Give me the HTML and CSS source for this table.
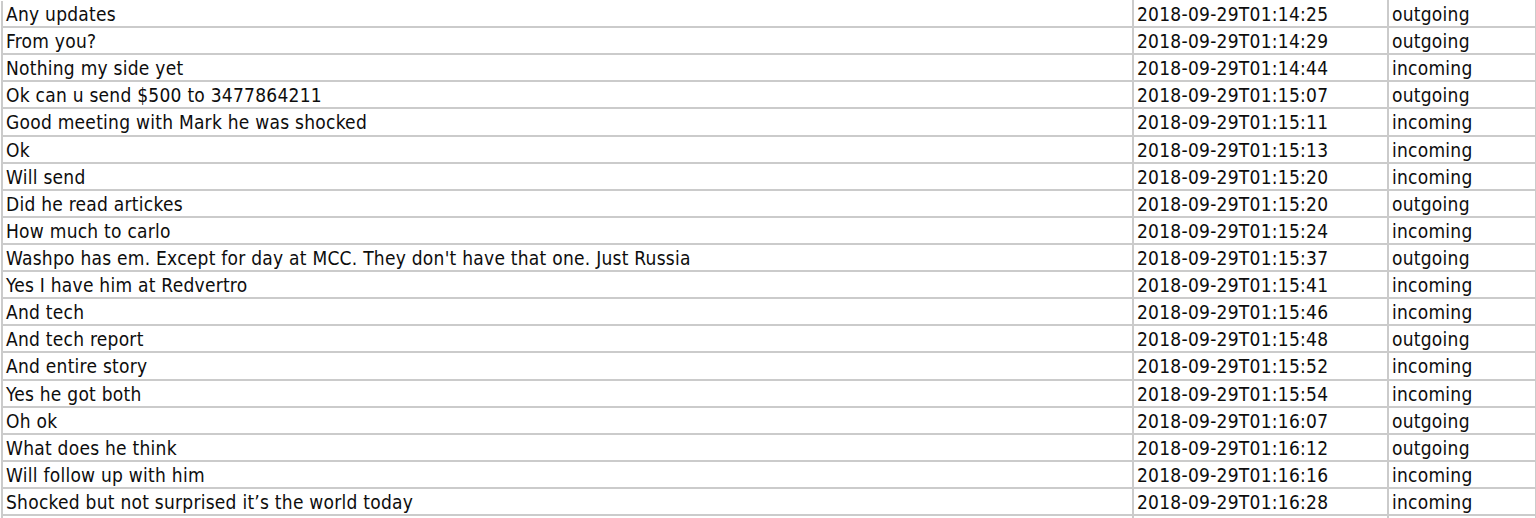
FILE: index.html
```html
<!DOCTYPE html>
<html lang="en">
<head>
    <meta charset="UTF-8">
    <title>Messages</title>
    <link rel="stylesheet" href="styles.css">
</head>
<body>

<table class="sheet">
    <colgroup>
        <col class="col-body">
        <col class="col-time">
        <col class="col-dir">
    </colgroup>
    <tr><td>Any updates</td><td>2018-09-29T01:14:25</td><td>outgoing</td></tr>
    <tr><td>From you?</td><td>2018-09-29T01:14:29</td><td>outgoing</td></tr>
    <tr><td>Nothing my side yet</td><td>2018-09-29T01:14:44</td><td>incoming</td></tr>
    <tr><td>Ok can u send $500 to 3477864211</td><td>2018-09-29T01:15:07</td><td>outgoing</td></tr>
    <tr><td>Good meeting with Mark he was shocked</td><td>2018-09-29T01:15:11</td><td>incoming</td></tr>
    <tr><td>Ok</td><td>2018-09-29T01:15:13</td><td>incoming</td></tr>
    <tr><td>Will send</td><td>2018-09-29T01:15:20</td><td>incoming</td></tr>
    <tr><td>Did he read artickes</td><td>2018-09-29T01:15:20</td><td>outgoing</td></tr>
    <tr><td>How much to carlo</td><td>2018-09-29T01:15:24</td><td>incoming</td></tr>
    <tr><td>Washpo has em. Except for day at MCC. They don't have that one. Just Russia</td><td>2018-09-29T01:15:37</td><td>outgoing</td></tr>
    <tr><td>Yes I have him at Redvertro</td><td>2018-09-29T01:15:41</td><td>incoming</td></tr>
    <tr><td>And tech</td><td>2018-09-29T01:15:46</td><td>incoming</td></tr>
    <tr><td>And tech report</td><td>2018-09-29T01:15:48</td><td>outgoing</td></tr>
    <tr><td>And entire story</td><td>2018-09-29T01:15:52</td><td>incoming</td></tr>
    <tr><td>Yes he got both</td><td>2018-09-29T01:15:54</td><td>incoming</td></tr>
    <tr><td>Oh ok</td><td>2018-09-29T01:16:07</td><td>outgoing</td></tr>
    <tr><td>What does he think</td><td>2018-09-29T01:16:12</td><td>outgoing</td></tr>
    <tr><td>Will follow up with him</td><td>2018-09-29T01:16:16</td><td>incoming</td></tr>
    <tr><td>Shocked but not surprised it’s the world today</td><td>2018-09-29T01:16:28</td><td>incoming</td></tr>
    <tr><td></td><td></td><td></td></tr>
</table>

</body>
</html>
```

FILE: styles.css
```css
* {
    box-sizing: border-box;
    margin: 0;
    padding: 0;
}

body {
    background: #fff;
    color: #0d0d0d;
    font-family: 'DejaVu Sans Condensed', 'DejaVu Sans', sans-serif;
    font-size: 19px;
    letter-spacing: 0.25px;
    overflow: hidden;
}

.sheet {
    border-collapse: collapse;
    table-layout: fixed;
    width: 1534px;
    margin: -1px 0 0 1px;
}

.col-body {
    width: 1131px;
}

.col-time {
    width: 255px;
}

.col-dir {
    width: 148px;
}

.sheet td {
    height: 27.12px;
    line-height: 24px;
    padding: 1px 3px 0;
    border: 2px solid #cbcbcb;
    white-space: nowrap;
    overflow: hidden;
    vertical-align: middle;
}

.sheet tr:first-child td {
    border-top-color: #fff;
}
```
